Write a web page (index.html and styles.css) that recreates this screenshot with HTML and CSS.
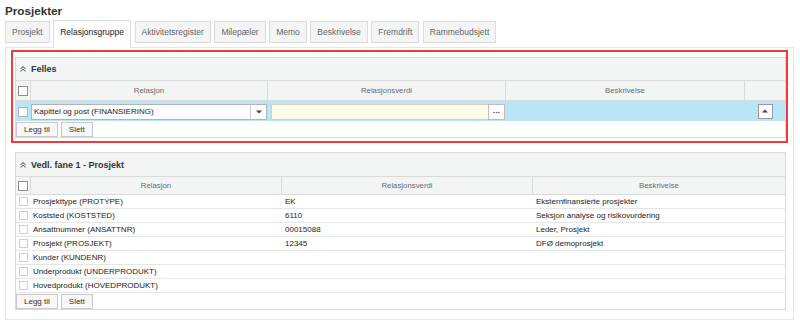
FILE: index.html
```html
<!DOCTYPE html>
<html lang="no">
<head>
  <meta charset="UTF-8" />
  <meta name="viewport" content="width=device-width, initial-scale=1.0"/>
  <title>Prosjekter</title>
  <link rel="stylesheet" href="styles.css">
</head>
<body>
  <h1 class="page-title">Prosjekter</h1>

  <ul class="tabs">
    <li class="tab">Prosjekt</li>
    <li class="tab active">Relasjonsgruppe</li>
    <li class="tab">Aktivitetsregister</li>
    <li class="tab">Milepæler</li>
    <li class="tab">Memo</li>
    <li class="tab">Beskrivelse</li>
    <li class="tab">Fremdrift</li>
    <li class="tab">Rammebudsjett</li>
  </ul>

  <div class="tab-body">
    <!-- Felles (marked) -->
    <div class="focus-box">
      <section class="panel">
        <div class="panel-head">
          <svg class="collapse-icon" width="6" height="6" viewBox="0 0 6 6">
            <polyline points="0.5,2.8 3,0.6 5.5,2.8" />
            <polyline points="0.5,5.4 3,3.2 5.5,5.4" />
          </svg>
          <span>Felles</span>
        </div>
        <div class="grid-row grid-head cols-felles">
          <div class="cell cell-check"><span class="check check-head"></span></div>
          <div class="cell">Relasjon</div>
          <div class="cell">Relasjonsverdi</div>
          <div class="cell">Beskrivelse</div>
          <div class="cell"></div>
        </div>
        <div class="grid-row edit-row cols-felles">
          <div class="cell cell-check"><span class="check"></span></div>
          <div class="cell">
            <div class="select">
              <span class="select-text">Kapittel og post (FINANSIERING)</span>
              <span class="select-arrow">
                <svg width="6" height="4" viewBox="0 0 6 4"><polygon points="0,0.5 6,0.5 3,3.5" /></svg>
              </span>
            </div>
          </div>
          <div class="cell">
            <div class="lookup">
              <span class="lookup-input"></span>
              <span class="lookup-btn">...</span>
            </div>
          </div>
          <div class="cell"></div>
          <div class="cell cell-center">
            <span class="up-btn">
              <svg width="6" height="4" viewBox="0 0 6 4"><polygon points="0,3.5 6,3.5 3,0.5" /></svg>
            </span>
          </div>
        </div>
        <div class="panel-actions">
          <button class="btn">Legg til</button>
          <button class="btn">Slett</button>
        </div>
      </section>
    </div>

    <!-- Vedl. fane 1 -->
    <section class="panel panel-list">
      <div class="panel-head head-tall">
        <svg class="collapse-icon" width="6" height="6" viewBox="0 0 6 6">
          <polyline points="0.5,2.8 3,0.6 5.5,2.8" />
          <polyline points="0.5,5.4 3,3.2 5.5,5.4" />
        </svg>
        <span>Vedl. fane 1 - Prosjekt</span>
      </div>
      <div class="grid-row grid-head head-short cols-list">
        <div class="cell cell-check"><span class="check check-head"></span></div>
        <div class="cell">Relasjon</div>
        <div class="cell">Relasjonsverdi</div>
        <div class="cell">Beskrivelse</div>
      </div>
      <div class="grid-row data-row cols-list">
        <div class="cell cell-check"><span class="check check-light"></span></div>
        <div class="cell">Prosjekttype (PROTYPE)</div>
        <div class="cell">EK</div>
        <div class="cell">Eksternfinansierte prosjekter</div>
      </div>
      <div class="grid-row data-row cols-list">
        <div class="cell cell-check"><span class="check check-light"></span></div>
        <div class="cell">Koststed (KOSTSTED)</div>
        <div class="cell">6110</div>
        <div class="cell">Seksjon analyse og risikovurdering</div>
      </div>
      <div class="grid-row data-row cols-list">
        <div class="cell cell-check"><span class="check check-light"></span></div>
        <div class="cell">Ansattnummer (ANSATTNR)</div>
        <div class="cell">00015088</div>
        <div class="cell">Leder, Prosjekt</div>
      </div>
      <div class="grid-row data-row cols-list">
        <div class="cell cell-check"><span class="check check-light"></span></div>
        <div class="cell">Prosjekt (PROSJEKT)</div>
        <div class="cell">12345</div>
        <div class="cell">DFØ demoprosjekt</div>
      </div>
      <div class="grid-row data-row cols-list">
        <div class="cell cell-check"><span class="check check-light"></span></div>
        <div class="cell">Kunder (KUNDENR)</div>
        <div class="cell"></div>
        <div class="cell"></div>
      </div>
      <div class="grid-row data-row cols-list">
        <div class="cell cell-check"><span class="check check-light"></span></div>
        <div class="cell">Underprodukt (UNDERPRODUKT)</div>
        <div class="cell"></div>
        <div class="cell"></div>
      </div>
      <div class="grid-row data-row cols-list">
        <div class="cell cell-check"><span class="check check-light"></span></div>
        <div class="cell">Hovedprodukt (HOVEDPRODUKT)</div>
        <div class="cell"></div>
        <div class="cell"></div>
      </div>
      <div class="panel-actions">
        <button class="btn">Legg til</button>
        <button class="btn">Slett</button>
      </div>
    </section>
  </div>
</body>
</html>
```

FILE: styles.css
```css
:root {
  --text: #333;
  --muted: #6b6b6b;
  --line: #dadada;
  --row-line: #e6e6e6;
  --head-bg: #f3f4f4;
  --selected: #b8e6f6;
  --lookup-bg: #fffde8;
  --focus: #f23a3a;
}

* {
  box-sizing: border-box;
}

body {
  margin: 0;
  background: #fff;
  color: var(--text);
  font-family: "Liberation Sans", Arial, sans-serif;
  font-size: 8px;
}

.page-title {
  margin: 0;
  padding: 4px 5px 0;
  font-size: 11.7px;
  line-height: 14px;
  font-weight: bold;
  color: #333;
}

/* Tabs */
.tabs {
  list-style: none;
  margin: 3px 0 0;
  padding: 0 0 0 5px;
  display: flex;
  align-items: flex-start;
  gap: 3.5px;
}

.tab {
  height: 22px;
  padding: 0 6px;
  border: 1px solid #dcdcdc;
  background: var(--head-bg);
  color: #666;
  font-size: 8.5px;
  line-height: 20px;
  white-space: nowrap;
}

.tab.active {
  position: relative;
  z-index: 1;
  height: 28px;
  margin-top: -1px;
  padding-top: 1px;
  background: #fff;
  color: #222;
  border-bottom-color: #fff;
}

.tab-body {
  margin: -1px 6px 0 5px;
  border: 1px solid #e6e6e6;
  padding: 0 0 9px;
}

.focus-box {
  margin: 2px 5px 0 5px;
  border: 2px solid var(--focus);
  padding: 5px 0 3px 2px;
}

/* Panels */
.panel {
  border: 1px solid var(--line);
  background: #fff;
}

.panel-list {
  margin: 9px 7px 0 9px;
}

.panel-head {
  height: 23px;
  display: flex;
  align-items: center;
  gap: 5px;
  padding-left: 4px;
  background: var(--head-bg);
  border-bottom: 1px solid var(--line);
  font-size: 9px;
  font-weight: bold;
  color: #333;
}

.panel-head.head-tall {
  height: 24px;
}

.collapse-icon polyline {
  fill: none;
  stroke: #777;
  stroke-width: 1.1;
}

/* Grid rows */
.grid-row {
  display: grid;
}

.cols-felles {
  grid-template-columns: 14px 237px 238px 239px 1fr;
}

.cols-list {
  grid-template-columns: 14px 251px 251px 1fr;
}

.cell {
  min-width: 0;
  white-space: nowrap;
  overflow: hidden;
}

.grid-head {
  height: 20px;
  background: var(--head-bg);
  border-bottom: 1px solid var(--line);
  color: var(--muted);
  font-size: 7.8px;
  line-height: 19px;
  text-align: center;
}

.grid-head.head-short {
  height: 18px;
  line-height: 17px;
}

.grid-head .cell + .cell {
  border-left: 1px solid var(--line);
}

.cell-check {
  display: flex;
  align-items: center;
  justify-content: center;
}

.check {
  display: block;
  width: 10px;
  height: 10px;
  background: #fff;
  border: 1px solid #b5b5b5;
}

.check-head {
  border-color: #8f8f8f;
}

.check-light {
  width: 9px;
  height: 9px;
  border-color: #cfcfcf;
}

.edit-row {
  height: 20px;
  background: var(--selected);
}

.edit-row .cell {
  padding-top: 3px;
}

.edit-row .cell-check {
  padding-top: 2px;
}

.edit-row .cell-center {
  padding-top: 0;
  display: flex;
  align-items: center;
  justify-content: center;
}

.select {
  display: flex;
  height: 16px;
  margin-left: 1px;
  background: #fff;
  border: 1px solid #b3b3b3;
}

.select-text {
  flex: 1;
  padding-left: 2px;
  line-height: 14px;
  color: #222;
}

.select-arrow {
  width: 16px;
  border-left: 1px solid #cfcfcf;
  display: flex;
  align-items: center;
  justify-content: center;
}

.select-arrow polygon,
.up-btn polygon {
  fill: #444;
}

.lookup {
  display: flex;
  height: 16px;
  margin-left: 4px;
}

.lookup-input {
  flex: 1;
  background: var(--lookup-bg);
  border: 1px solid #cfcfcf;
  border-right: none;
}

.lookup-btn {
  width: 17px;
  background: #fff;
  border: 1px solid #bdbdbd;
  color: #333;
  font-weight: bold;
  font-size: 8px;
  line-height: 11px;
  text-align: center;
  letter-spacing: 0.3px;
}

.up-btn {
  width: 15px;
  height: 15px;
  background: #fff;
  border: 1px solid #9a9a9a;
  display: flex;
  align-items: center;
  justify-content: center;
  margin-left: 1px;
}

.data-row {
  height: 14px;
  border-bottom: 1px solid var(--row-line);
  color: #222;
  font-size: 8px;
  line-height: 13px;
}

.data-row .cell + .cell {
  padding-left: 3px;
}

.data-row .cell:nth-child(n+3) {
  padding-left: 4px;
}

/* Buttons */
.panel-actions {
  display: flex;
  gap: 3px;
  height: 16px;
  padding: 1px 0 0;
}

.btn {
  height: 15px;
  padding: 0 7px;
  border: 1px solid #c9c9c9;
  background: #f8f8f8;
  color: #333;
  font-family: inherit;
  font-size: 8px;
  line-height: 13px;
  cursor: pointer;
}
```
